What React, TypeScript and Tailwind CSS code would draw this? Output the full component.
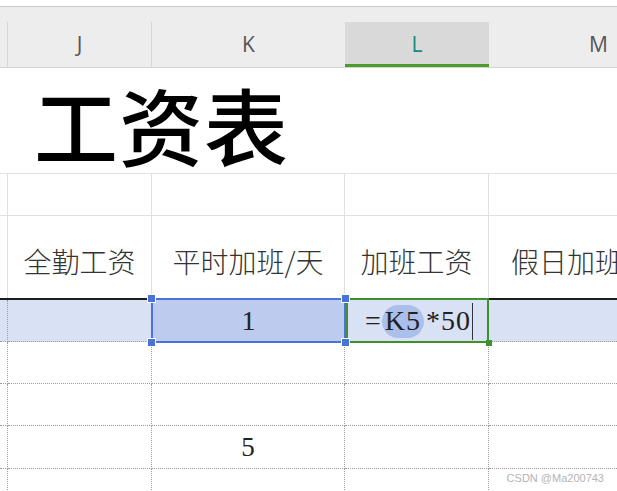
import React from "react";

const cols = [
  { key: "a", w: "w-[8px]" },
  { key: "J", w: "w-[144px]" },
  { key: "K", w: "w-[193px]" },
  { key: "L", w: "w-[144px]" },
  { key: "M", w: "w-[220px]" },
];

const cjk = { fontFamily: '"Noto Sans CJK SC", "Noto Sans", sans-serif' };
const serif = { fontFamily: '"Liberation Serif", "Noto Sans CJK SC", serif' };

const Handle: React.FC<{ className: string }> = ({ className }) => (
  <span
    className={`absolute w-[9px] h-[9px] bg-[#4a72d8] border border-white z-20 ${className}`}
  />
);

const DottedRow: React.FC<{ h: string; k?: string }> = ({ h, k }) => (
  <div className={`flex ${h} shrink-0`}>
    {cols.map((c) => (
      <div
        key={c.key}
        className={`${c.w} shrink-0 border-r border-b border-dotted border-[#9c9c9c] flex items-center justify-center text-[27px] text-[#222]`}
        style={serif}
      >
        {c.key === "K" ? k : null}
      </div>
    ))}
  </div>
);

export default function App() {
  return (
    <div className="relative w-[617px] h-[491px] overflow-hidden bg-white flex flex-col">
      {/* column header */}
      <div className="h-[6px] shrink-0 border-b border-[#c9c9c9] box-content" />
      <div className="bg-[#ededed] shrink-0 border-b border-[#d3d3d3]">
        <div className="h-[15px]" />
        <div className="flex h-[45px]" style={{ fontFamily: '"Open Sans", "Noto Sans", sans-serif' }}>
          {cols.map((c) => (
            <div
              key={c.key}
              className={`${c.w} shrink-0 flex items-center justify-center text-[21px] ${
                c.key === "L"
                  ? "bg-[#d9d9d9] text-[#1b8a7c] border-b-[3px] border-[#4b9b2e] pt-[3px]"
                  : "text-[#555] border-r border-[#d6d6d6]"
              } ${c.key === "K" ? "border-r-0" : ""}`}
            >
              {c.key === "a" ? "" : c.key}
            </div>
          ))}
        </div>
      </div>

      {/* title row */}
      <div className="h-[106px] shrink-0 border-b border-[#e1e1e1] flex items-center pl-[34px] pt-[6px]">
        <span className="text-[84px] leading-none font-medium text-black tracking-[1px]" style={cjk}>
          工资表
        </span>
      </div>

      {/* empty row */}
      <div className="flex h-[42px] shrink-0">
        {cols.map((c) => (
          <div key={c.key} className={`${c.w} shrink-0 border-r border-b border-[#e1e1e1]`} />
        ))}
      </div>

      {/* header row */}
      <div className="flex h-[84px] shrink-0 border-b-2 border-[#1c1c1c]">
        {[
          { c: cols[0], t: "" },
          { c: cols[1], t: "全勤工资" },
          { c: cols[2], t: "平时加班/天" },
          { c: cols[3], t: "加班工资" },
          { c: cols[4], t: "假日加班/天" },
        ].map(({ c, t }) => (
          <div
            key={c.key}
            className={`${c.w} shrink-0 border-r border-[#e1e1e1] flex items-center overflow-hidden whitespace-nowrap pt-[8px] text-[28px] font-light text-[#333] ${
              c.key === "M" ? "justify-start pl-[22px]" : "justify-center"
            }`}
            style={cjk}
          >
            {t}
          </div>
        ))}
      </div>

      {/* selected row */}
      <div className="flex h-[42px] shrink-0 bg-[#d9e1f4]">
        <div className="w-[8px] shrink-0 border-r border-b border-dotted border-[#9c9c9c]" />
        <div className="w-[144px] shrink-0 border-b border-dotted border-[#9c9c9c]" />
        <div className="relative w-[193px] shrink-0 bg-[#bdccee]">
          <div className="absolute -left-[1px] -top-[2px] -right-[1px] -bottom-[1px] border-2 border-[#4a72d8] z-10" />
          <Handle className="-left-[5px] -top-[6px]" />
          <Handle className="-right-[5px] -top-[6px]" />
          <Handle className="-left-[5px] -bottom-[5px]" />
          <Handle className="-right-[5px] -bottom-[5px]" />
          <div className="h-full flex items-center justify-center text-[28px] text-[#222]" style={serif}>
            1
          </div>
        </div>
        <div className="relative w-[144px] shrink-0">
          <div className="absolute left-[1px] -top-[2px] right-[0px] -bottom-[1px] border-2 border-[#3f8f2a] z-10" />
          <span className="absolute -right-[3px] -bottom-[4px] w-[6px] h-[6px] bg-[#3f8f2a] z-20" />
          <div className="h-full flex items-center pl-[20px] text-[28px] text-[#222]" style={serif}>
            <span className="mr-[1px]">=</span>
            <span className="bg-[#aabfea] rounded-full px-[3px] h-[33px] flex items-center tracking-[1px]">K5</span>
            <span className="ml-[2px] tracking-[1px]">*50</span>
            <span className="w-[1px] h-[37px] bg-[#333] ml-[1px]" />
          </div>
        </div>
        <div className="w-[220px] shrink-0 border-b border-dotted border-[#9c9c9c]" />
      </div>

      <DottedRow h="h-[42px]" />
      <DottedRow h="h-[42px]" />
      <DottedRow h="h-[43px]" k="5" />
      <DottedRow h="h-[43px]" />

      <div
        className="absolute right-[13px] bottom-[5px] text-[11px] text-[#b4b4b4]"
        style={{ fontFamily: '"Liberation Sans", sans-serif' }}
      >
        CSDN @Ma200743
      </div>
    </div>
  );
}
